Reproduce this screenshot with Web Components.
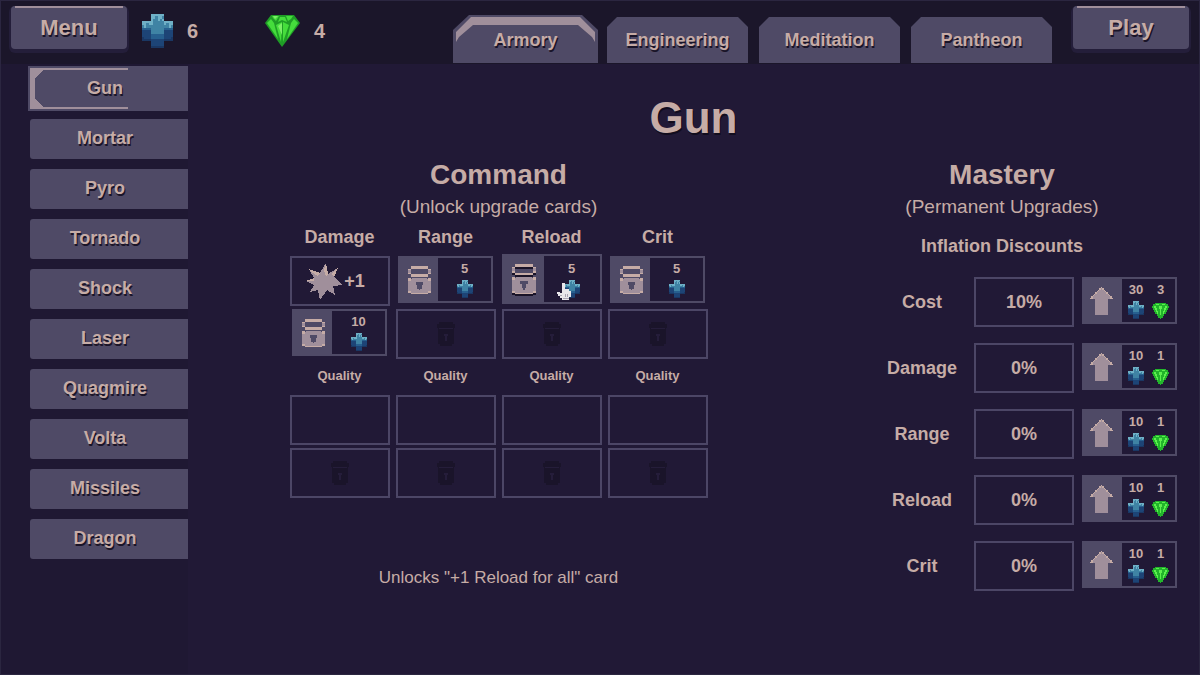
<!DOCTYPE html>
<html lang="en">
<head>
<meta charset="utf-8">
<title>Armory</title>
<style>
	:root {
		--bg: #211936;
		--bg-side: #1f1833;
		--bg-top: #1b162a;
		--panel: #4f4a66;
		--line: #4c4666;
		--hilight: #a08f9b;
		--text: #c6aca6;
		--edge: #2b2640;
		--shadow: #1a1428;
	}
	body {
		margin: 0;
		background: var(--bg);
		color: var(--text);
		font: bold 18px/20px "Liberation Sans", Arial, sans-serif;
	}
</style>
</head>
<body>
<game-screen>
	<top-bar slot="top">
		<game-button slot="start">Menu</game-button>
		<resource-count slot="start" icon="cross">6</resource-count>
		<resource-count slot="start" icon="gem">4</resource-count>
		<tab-button selected>Armory</tab-button>
		<tab-button>Engineering</tab-button>
		<tab-button>Meditation</tab-button>
		<tab-button>Pantheon</tab-button>
		<game-button slot="end">Play</game-button>
	</top-bar>
	<side-menu slot="side" items="Gun,Mortar,Pyro,Tornado,Shock,Laser,Quagmire,Volta,Missiles,Dragon" selected="Gun"></side-menu>
	<span slot="title">Gun</span>
	<upgrade-section class="command" heading="Command" note="(Unlock upgrade cards)">
		<card-grid></card-grid>
	</upgrade-section>
	<upgrade-section class="mastery" heading="Mastery" note="(Permanent Upgrades)">
		<mastery-list heading="Inflation Discounts">
			<mastery-row name="Cost" value="10%" cross="30" gem="3"></mastery-row>
			<mastery-row name="Damage" value="0%" cross="10" gem="1"></mastery-row>
			<mastery-row name="Range" value="0%" cross="10" gem="1"></mastery-row>
			<mastery-row name="Reload" value="0%" cross="10" gem="1"></mastery-row>
			<mastery-row name="Crit" value="0%" cross="10" gem="1"></mastery-row>
		</mastery-list>
	</upgrade-section>
</game-screen>

<script>
// pixel sprites, one character per pixel
const palette = {
	a: '#6fb0c6', b: '#3f83a4', c: '#27608f', d: '#1d4476', e: '#1a3763',
	p: '#c6aca6', m: '#a08f9b', k: '#4f4a66'
};

const sprites = {
	cross: [
		'....aaaaaa....',
		'....aabaab....',
		'....abbaba....',
		'aaaaabbbbbaaaa',
		'aabaabbbbbabaa',
		'babbbbbbbbbbab',
		'ccccbbbbbbcccc',
		'ddddbbbbbbdddd',
		'ddddbbbbbbdddd',
		'ddddccccccdddd',
		'edddccccccddde',
		'eeeeddddddeeee',
		'....dddddd....',
		'....dddddd....',
		'....eeeeee....'
	],
	arrow: [
		'........p........',
		'.......pmp.......',
		'......pmmmp......',
		'.....pmmmmmp.....',
		'....pmmmmmmmp....',
		'...pmmmmmmmmmp...',
		'..pmmmmmmmmmmmp..',
		'.pmmmmmmmmmmmmmp.',
		'ppmmmmmmmmmmmmmpp',
		'....mmmmmmmmm....',
		'....mmmmmmmmm....',
		'....mmmmmmmmm....',
		'....mmmmmmmmm....',
		'....mmmmmmmmm....',
		'....mmmmmmmmm....',
		'....mmmmmmmmm....',
		'....mmmmmmmmm....',
		'....mmmmmmmmm....',
		'....mmmmmmmmm....',
		'....mmmmmmmmm....',
		'....mmmmmmmmm....'
	],
	lock: [
		'..ppppppppppppp..',
		'..ppppppppppppp..',
		'pp.............pp',
		'mm.............mm',
		'mm.............mm',
		'pp.............pp',
		'..ppppppppppppp..',
		'..ppppppppppppp..',
		'.................',
		'pp.mmmmmmmmmmm.pp',
		'ppmmmmmmmmmmmmmpp',
		'mmmmmmmmmmmmmmmmm',
		'mmmmmmkkkkkmmmmmm',
		'mmmmmmkkkkkmmmmmm',
		'mmmmmmmkkkmmmmmmm',
		'mmmmmmmkkkmmmmmmm',
		'mmmmmmmkkkmmmmmmm',
		'mmmmmmmmkmmmmmmmm',
		'mmmmmmmmmmmmmmmmm',
		'ppmmmmmmmmmmmmmpp',
		'..ppppppppppppp..'
	]
};

const drawings = {
	gem: `<svg viewBox="0 0 35 32">
		<path d="M6 0H29L35 8 17 32 0 8Z" fill="#1f9d26"/>
		<path d="M7 1H14L11 6 8 3ZM21 1H28L26 4 23 6ZM15 2H20L22 7 17 5 13 7ZM2 8L6 4 9 8 13 24ZM33 8L29 4 26 8 22 24ZM11 10L17 7 16 27ZM24 10L18 7 18 27Z" fill="#45dd3c"/>
		<path d="M13 11L17 8 17 20ZM8 1H13L10 4Z" fill="#7cee68"/>
	</svg>`,
	smallGem: `<svg viewBox="0 0 17 16" shape-rendering="crispEdges">
		<path d="M3 0H14V1H16V3H17V5H16V7H15V9H14V11H12V13H11V15H9V16H8V15H6V13H5V11H3V9H2V7H1V5H0V3H1V1H3Z" fill="#22b52b"/>
		<path d="M4 1H7V2H4ZM10 1H13V2H10ZM2 3H4V5H5V8H6V11H5V9H4V7H3V5H2ZM15 3H13V5H12V8H11V11H12V9H13V7H14V5H15ZM7 3H10V6H9V12H8V6H7Z" fill="#5df04e"/>
	</svg>`,
	burst: `<svg viewBox="0 0 38 37" shape-rendering="crispEdges">
		<path d="M20 0L22 11 32 5 28 14 37 22 27 23 29 32 21 27 14 37 12 27 4 29 8 22 0 18 8 15 3 6 14 10Z" fill="#a08f9b"/>
		<path d="M20 0L22 11 20 13 18 7ZM32 5L28 14 25 11ZM3 6L14 10 12 13 5 9ZM0 18L8 15 8 18Z" fill="#c6aca6"/>
	</svg>`,
	shut: `<svg viewBox="0 0 18 24" shape-rendering="crispEdges">
		<path d="M2 0H16V2H18V6H17V22H15V24H3V22H1V6H0V2H2Z" fill="#1a142a"/>
		<path d="M2 6H16V7H2ZM7 12H11V14H10V19H8V14H7Z" fill="#251d3a"/>
	</svg>`,
	hand: `<svg viewBox="0 0 14 17" shape-rendering="crispEdges">
		<path d="M5 0H8V6H12V8H14V14H12V17H5V15H3V13H1V11H0V9H3V10H5Z" fill="#e9e6ea"/>
		<path d="M8 11H9V14H8ZM10 11H11V14H10ZM5 15H12V16H6ZM3 12H5V13H3Z" fill="#a9a4b2"/>
	</svg>`
};

function spriteSvg(rows) {
	let rects = '';
	rows.forEach((row, y) => {
		// merge runs of one colour
		for (const run of row.matchAll(/([a-z])\1*/g)) {
			rects += `<rect x="${run.index}" y="${y}" width="${run[0].length}" height="1" fill="${palette[run[1]]}"/>`;
		}
	});
	return `<svg viewBox="0 0 ${rows[0].length} ${rows.length}" preserveAspectRatio="none" shape-rendering="crispEdges">${rects}</svg>`;
}

class BaseElement extends HTMLElement {
	connectedCallback() {
		if (this.shadowRoot) return;
		this.attachShadow({ mode: "open" });
		this.shadowRoot.innerHTML = this.render();
	}

	attr(name, fallback = '') {
		return this.getAttribute(name) ?? fallback;
	}
}

class PixelIcon extends BaseElement {
	render() {
		const name = this.attr('name');
		return `
			<style>
				:host { display: block; flex: none; }
				svg { display: block; width: 100%; height: 100%; }
			</style>
			${drawings[name] || spriteSvg(sprites[name])}
		`;
	}
}

class GameScreen extends BaseElement {
	render() {
		return `
			<style>
				:host {
					display: flex;
					flex-direction: column;
					box-sizing: border-box;
					min-height: 100vh;
					border: 1px solid var(--edge);
				}
				.body { display: flex; flex: 1; }
				main { flex: 1; padding: 30px 0 24px; }
				h1 {
					margin: 0 0 17px;
					font-size: 44px;
					line-height: 48px;
					text-align: center;
					text-shadow: 1px 2px 0 #120d1e;
				}
				.sections { display: flex; padding-right: 22px; }
				::slotted(.command) { flex: 1; padding-right: 18px; }
				::slotted(.mastery) { flex: none; width: 350px; }
			</style>
			<slot name="top"></slot>
			<div class="body">
				<slot name="side"></slot>
				<main>
					<h1><slot name="title"></slot></h1>
					<div class="sections"><slot></slot></div>
				</main>
			</div>
		`;
	}
}

class TopBar extends BaseElement {
	render() {
		return `
			<style>
				:host {
					display: flex;
					height: 63px;
					box-sizing: border-box;
					padding: 5px 10px 1px;
					background: var(--bg-top);
				}
				.start { display: flex; flex: 1; gap: 15px; }
				nav { display: flex; align-items: flex-end; gap: 11px; margin-right: 21px; }
			</style>
			<div class="start"><slot name="start"></slot></div>
			<nav><slot></slot></nav>
			<slot name="end"></slot>
		`;
	}
}

class GameButton extends BaseElement {
	render() {
		return `
			<style>
				:host { display: block; }
				button {
					width: 116px;
					height: 43px;
					padding: 0;
					border: 0;
					border-radius: 4px;
					background: linear-gradient(var(--hilight), var(--hilight)) center top / 108px 2px no-repeat var(--panel);
					box-shadow: 0 2px 0 2px #241e3a;
					color: inherit;
					font: inherit;
					font-size: 22px;
					text-shadow: 1px 2px 0 var(--shadow);
				}
			</style>
			<button type="button"><slot></slot></button>
		`;
	}
}

class ResourceCount extends BaseElement {
	render() {
		const icon = this.attr('icon');
		return `
			<style>
				:host {
					display: flex;
					align-items: center;
					gap: 14px;
					width: 108px;
					height: 50px;
					font-size: 20px;
				}
				.cross { width: 31px; height: 34px; }
				.gem { width: 35px; height: 32px; }
			</style>
			<pixel-icon class="${icon}" name="${icon}"></pixel-icon>
			<span><slot></slot></span>
		`;
	}
}

class TabButton extends BaseElement {
	render() {
		return `
			<style>
				:host { display: block; }
				button {
					position: relative;
					display: block;
					width: 141px;
					height: 46px;
					padding: 0;
					border: 0;
					background: var(--panel);
					clip-path: polygon(0 10px, 10px 0, calc(100% - 10px) 0, 100% 10px, 100% 100%, 0 100%);
					color: inherit;
					font: inherit;
					text-shadow: 1px 2px 0 var(--shadow);
				}
				:host([selected]) { margin: 0 -2px; }
				:host([selected]) button {
					width: 145px;
					height: 48px;
					padding-top: 2px;
					clip-path: polygon(0 15px, 16px 0, calc(100% - 16px) 0, 100% 15px, 100% 100%, 0 100%);
				}
				:host([selected]) button::before {
					content: "";
					position: absolute;
					inset: 2px 3px auto;
					height: 25px;
					background: var(--hilight);
					clip-path: polygon(0 15px, 15px 0, calc(100% - 15px) 0, 100% 15px, 100% 25px, calc(100% - 3px) 20px, calc(100% - 17px) 8px, 17px 8px, 3px 20px, 0 25px);
				}
			</style>
			<button type="button"><slot></slot></button>
		`;
	}
}

class SideMenu extends BaseElement {
	render() {
		const selected = this.attr('selected');
		const items = this.attr('items').split(',').map(name =>
			`<button type="button"${name === selected ? ' class="selected" aria-current="true"' : ''}>${name}</button>`
		).join('');
		return `
			<style>
				:host {
					display: block;
					box-sizing: border-box;
					width: 187px;
					padding: 5px 0 0 29px;
					background: var(--bg-side);
				}
				nav { display: flex; flex-direction: column; gap: 10px; }
				button {
					position: relative;
					height: 40px;
					padding: 0 8px 2px 0;
					border: 0;
					border-radius: 3px 0 0 3px;
					background: var(--panel);
					color: inherit;
					font: inherit;
					text-shadow: 1px 2px 0 var(--shadow);
				}
				.selected {
					height: 45px;
					margin: -3px 0 -2px -2px;
					padding-right: 6px;
					border-radius: 0;
				}
				.selected::before {
					content: "";
					position: absolute;
					inset: 2px 60px 2px 2px;
					border: solid var(--hilight);
					border-width: 2px 0 2px 5px;
					background:
						linear-gradient(135deg, var(--hilight) 6px, transparent 6px),
						linear-gradient(45deg, var(--hilight) 6px, transparent 6px);
				}
			</style>
			<nav>${items}</nav>
		`;
	}
}

class UpgradeSection extends BaseElement {
	render() {
		return `
			<style>
				:host { display: block; text-align: center; }
				h2 { margin: 0 0 4px; font-size: 28px; line-height: 32px; }
				p { margin: 0 0 8px; font-size: 19px; font-weight: normal; line-height: 24px; }
			</style>
			<h2>${this.attr('heading')}</h2>
			<p>${this.attr('note')}</p>
			<slot></slot>
		`;
	}
}

// button with an icon block on the left and its prices on the right
class BuyButton extends BaseElement {
	render() {
		const icon = this.attr('icon');
		const prices = ['cross', 'gem'].filter(kind => this.hasAttribute(kind)).map(kind => `
			<span class="price">
				<span>${this.attr(kind)}</span>
				<pixel-icon class="${kind}" name="${kind === 'gem' ? 'smallGem' : kind}"></pixel-icon>
			</span>
		`).join('');
		return `
			<style>
				:host { display: block; position: relative; width: 95px; height: 47px; }
				:host([hovered]) { width: 100px; height: 50px; margin-top: -2px; }
				button {
					display: flex;
					width: 100%;
					height: 100%;
					padding: 0;
					border: 2px solid var(--panel);
					background: var(--bg);
					color: inherit;
					font: inherit;
				}
				.icon {
					display: flex;
					align-items: center;
					justify-content: center;
					box-sizing: border-box;
					width: 38px;
					height: 100%;
					background: var(--panel);
				}
				.icon.arrow { padding-right: 4px; }
				:host([hovered]) .icon { width: 40px; }
				.icon pixel-icon { width: 23px; height: 28px; }
				:host([hovered]) .icon pixel-icon { width: 24px; height: 30px; filter: drop-shadow(0 2px 0 #1a1428); }
				.prices { display: flex; flex: 1; align-items: center; align-self: stretch; justify-content: center; gap: 8px; }
				.price {
					display: flex;
					flex-direction: column;
					align-items: center;
					justify-content: space-between;
					height: 37px;
					font-size: 13px;
					line-height: 16px;
				}
				.cross { width: 16px; height: 18px; }
				.gem { width: 17px; height: 16px; }
				.hand { position: absolute; left: 55px; top: 29px; width: 14px; height: 17px; }
			</style>
			<button type="button" aria-label="${this.attr('label', 'Buy')}">
				<span class="icon ${icon}"><pixel-icon name="${icon}"></pixel-icon></span>
				<span class="prices">${prices}</span>
			</button>
			${this.hasAttribute('hovered') ? '<pixel-icon class="hand" name="hand"></pixel-icon>' : ''}
		`;
	}
}

class CardGrid extends BaseElement {
	render() {
		const shut = '<div class="cell"><pixel-icon class="shut" name="shut"></pixel-icon></div>';
		const empty = '<div class="cell"></div>';
		const buy = (cost, extra = '') => `<buy-button icon="lock" label="Unlock" cross="${cost}" ${extra}></buy-button>`;
		const heads = ['Damage', 'Range', 'Reload', 'Crit'].map(name => `<h3>${name}</h3>`).join('');
		return `
			<style>
				:host { display: block; }
				.grid {
					display: grid;
					grid-template-columns: repeat(4, 100px);
					justify-content: center;
					justify-items: center;
					gap: 3px 6px;
				}
				h3 { margin: 0 0 6px; font-size: 18px; line-height: 20px; }
				h4 { margin: 6px 0 8px; font-size: 13px; line-height: 16px; }
				.cell {
					display: flex;
					align-items: center;
					justify-content: center;
					box-sizing: border-box;
					width: 100px;
					height: 50px;
					border: 2px solid var(--line);
				}
				.owned { padding-right: 8px; }
				.burst { width: 38px; height: 37px; }
				.shut { width: 18px; height: 24px; }
				p { margin: 68px 0 0; font-size: 17px; font-weight: normal; line-height: 24px; }
			</style>
			<div class="grid">
				${heads}
				<div class="cell owned"><pixel-icon class="burst" name="burst"></pixel-icon>+1</div>
				${buy(5)}${buy(5, 'hovered')}${buy(5)}
				${buy(10)}${shut.repeat(3)}
				${'<h4>Quality</h4>'.repeat(4)}
				${empty.repeat(4)}
				${shut.repeat(4)}
			</div>
			<p>Unlocks "+1 Reload for all" card</p>
		`;
	}
}

class MasteryList extends BaseElement {
	render() {
		return `
			<style>
				:host { display: block; }
				h3 { margin: 17px 0 21px; font-size: 18px; line-height: 20px; }
				.rows { display: flex; flex-direction: column; gap: 16px; }
			</style>
			<h3>${this.attr('heading')}</h3>
			<div class="rows"><slot></slot></div>
		`;
	}
}

class MasteryRow extends BaseElement {
	render() {
		const name = this.attr('name');
		return `
			<style>
				:host { display: flex; justify-content: flex-end; }
				label { width: 104px; line-height: 50px; }
				output {
					box-sizing: border-box;
					width: 100px;
					height: 50px;
					margin-right: 8px;
					border: 2px solid var(--line);
					line-height: 46px;
				}
			</style>
			<label for="value">${name}</label>
			<output id="value">${this.attr('value')}</output>
			<buy-button icon="arrow" label="Upgrade ${name}" cross="${this.attr('cross')}" gem="${this.attr('gem')}"></buy-button>
		`;
	}
}

customElements.define('pixel-icon', PixelIcon);
customElements.define('game-screen', GameScreen);
customElements.define('top-bar', TopBar);
customElements.define('game-button', GameButton);
customElements.define('resource-count', ResourceCount);
customElements.define('tab-button', TabButton);
customElements.define('side-menu', SideMenu);
customElements.define('upgrade-section', UpgradeSection);
customElements.define('buy-button', BuyButton);
customElements.define('card-grid', CardGrid);
customElements.define('mastery-list', MasteryList);
customElements.define('mastery-row', MasteryRow);
</script>
</body>
</html>
